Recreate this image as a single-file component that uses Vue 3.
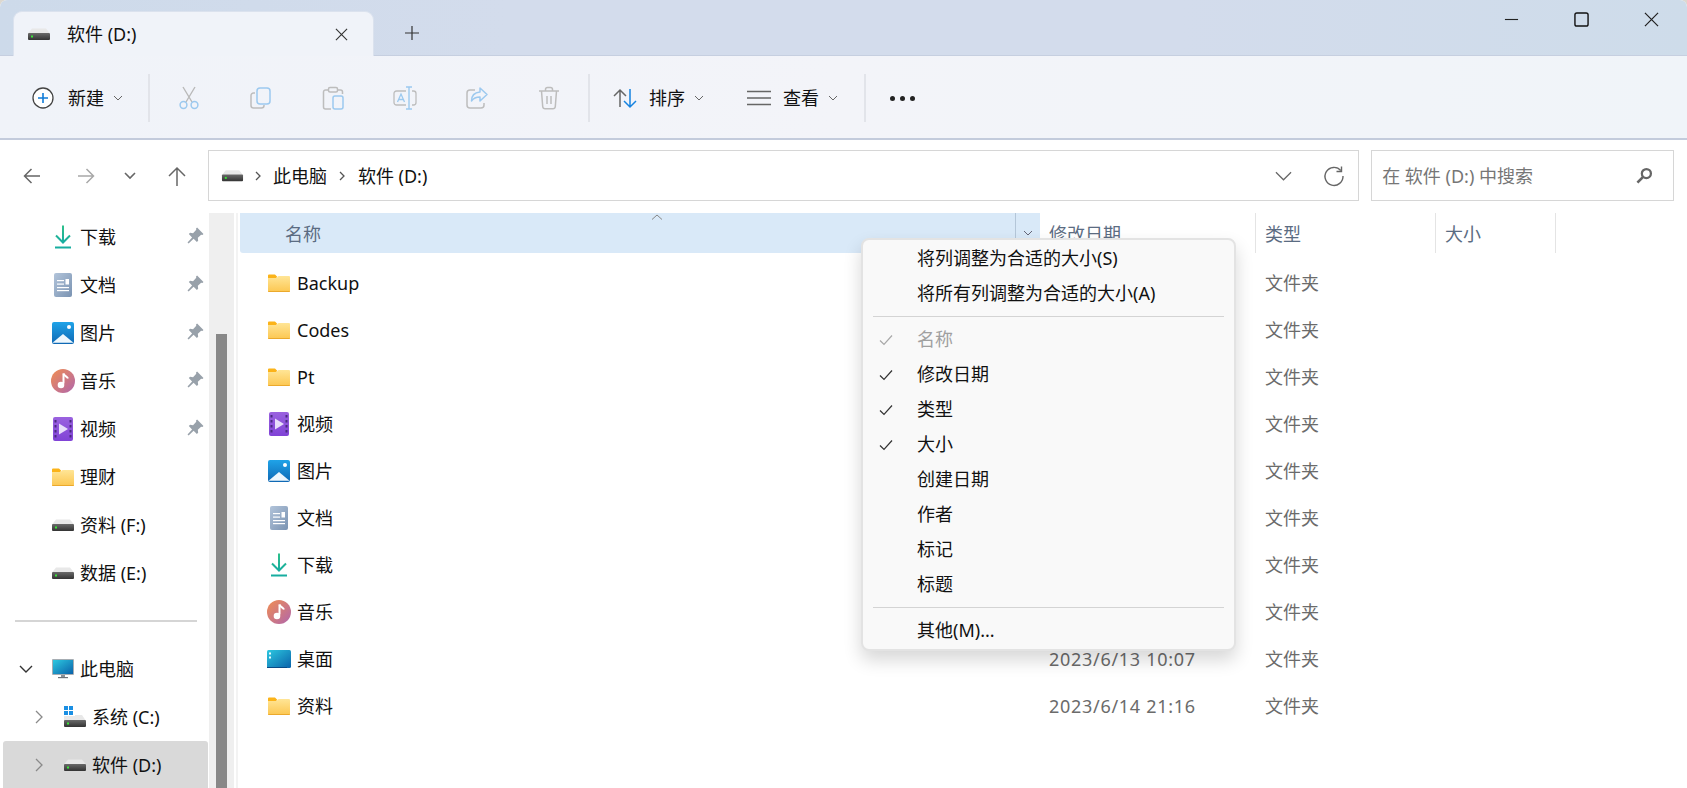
<script setup>
const quick = [
  { icon: 'i-download', label: '下载', pin: true },
  { icon: 'i-doc', label: '文档', pin: true },
  { icon: 'i-pic', label: '图片', pin: true },
  { icon: 'i-music', label: '音乐', pin: true },
  { icon: 'i-video', label: '视频', pin: true },
  { icon: 'i-folder', label: '理财' },
  { icon: 'i-drive', label: '资料 (F:)' },
  { icon: 'i-drive', label: '数据 (E:)' }
]
const files = [
  { icon: 'i-folder', name: 'Backup' },
  { icon: 'i-folder', name: 'Codes' },
  { icon: 'i-folder', name: 'Pt' },
  { icon: 'i-video', name: '视频' },
  { icon: 'i-pic', name: '图片' },
  { icon: 'i-doc', name: '文档' },
  { icon: 'i-download', name: '下载' },
  { icon: 'i-music', name: '音乐' },
  { icon: 'i-desktop', name: '桌面', date: '2023/6/13 10:07' },
  { icon: 'i-folder', name: '资料', date: '2023/6/14 21:16' }
]
const tools = ['t-cut', 't-copy', 't-paste', 't-rename', 't-share', 't-trash']
const menuTop = [{ label: '将列调整为合适的大小(S)' }, { label: '将所有列调整为合适的大小(A)' }]
const menuCols = [
  { label: '名称', check: true, off: true },
  { label: '修改日期', check: true },
  { label: '类型', check: true },
  { label: '大小', check: true },
  { label: '创建日期' },
  { label: '作者' },
  { label: '标记' },
  { label: '标题' }
]
</script>

<template>
  <div class="win">
    <svg class="defs" width="0" height="0" aria-hidden="true">
      <defs>
        <linearGradient id="g-folder" x1="0" y1="0" x2="0" y2="1"><stop offset="0" stop-color="#ffe596" /><stop offset="1" stop-color="#fcc751" /></linearGradient>
        <linearGradient id="g-pic" x1="0" y1="0" x2="0" y2="1"><stop offset="0" stop-color="#1fa3e8" /><stop offset="1" stop-color="#0f68b4" /></linearGradient>
        <linearGradient id="g-doc" x1="0" y1="0" x2="1" y2="1"><stop offset="0" stop-color="#b2c4da" /><stop offset="1" stop-color="#7a93b2" /></linearGradient>
        <linearGradient id="g-music" x1="0" y1="0" x2="1" y2="1"><stop offset="0" stop-color="#f18e52" /><stop offset="1" stop-color="#b066ac" /></linearGradient>
        <linearGradient id="g-video" x1="0" y1="0" x2="0" y2="1"><stop offset="0" stop-color="#9a62df" /><stop offset="1" stop-color="#8043d6" /></linearGradient>
        <linearGradient id="g-desk" x1="0" y1="0" x2="1" y2="1"><stop offset="0" stop-color="#2cc8e0" /><stop offset="1" stop-color="#0a62aa" /></linearGradient>
        <linearGradient id="g-green" x1="0" y1="0" x2="0" y2="1"><stop offset="0" stop-color="#2ec08a" /><stop offset="1" stop-color="#17ada0" /></linearGradient>
        <linearGradient id="g-drive" x1="0" y1="0" x2="0" y2="1"><stop offset="0" stop-color="#6a6a6a" /><stop offset="1" stop-color="#333" /></linearGradient>
        <symbol id="i-folder" viewBox="0 0 24 24">
          <path d="M1 4.5A1 1 0 0 1 2 3.500h6l2.500 2.500L8 7.500H1z" fill="#fbb319" />
          <path d="M1 7h8.500l2-2H22a1 1 0 0 1 1 1v14a1 1 0 0 1-1 1H2a1 1 0 0 1-1-1z" fill="url(#g-folder)" />
          <path d="M1 20h22a1 1 0 0 1-1 1H2a1 1 0 0 1-1-1z" fill="#eba92c" />
        </symbol>
        <symbol id="i-video" viewBox="0 0 24 24">
          <rect x="2" y="0" width="20" height="24" rx="2" fill="url(#g-video)" />
          <g fill="#4a2a80"><rect x="3.500" y="3" width="2" height="2.500" /><rect x="3.500" y="8" width="2" height="2.500" /><rect x="3.500" y="13" width="2" height="2.500" /><rect x="3.500" y="18" width="2" height="2.500" /><rect x="18.500" y="3" width="2" height="2.500" /><rect x="18.500" y="8" width="2" height="2.500" /><rect x="18.500" y="13" width="2" height="2.500" /><rect x="18.500" y="18" width="2" height="2.500" /></g>
          <path d="M8 6.500 17 12l-9 5.500z" fill="#e8defa" />
        </symbol>
        <symbol id="i-pic" viewBox="0 0 24 24">
          <rect x="1" y="1" width="22" height="22" rx="2" fill="url(#g-pic)" />
          <path d="M1.500 21.800 12 13 22.500 21.800z" fill="#eef7fd" />
          <circle cx="18" cy="6" r="2" fill="#fff" />
        </symbol>
        <symbol id="i-doc" viewBox="0 0 24 24">
          <rect x="3" y="0" width="18" height="24" rx="2" fill="url(#g-doc)" />
          <g fill="#fff"><rect x="6" y="7" width="7" height="1.200" /><rect x="6" y="10.500" width="7" height="1.200" /><rect x="6" y="14" width="12" height="1.200" /><rect x="6" y="17" width="12" height="1.200" /><rect x="14.500" y="6" width="3.500" height="5.500" /></g>
        </symbol>
        <symbol id="i-download" viewBox="0 0 24 24">
          <path d="M12 .5V17M5 10.500l7 7 7-7" fill="none" stroke="url(#g-green)" stroke-width="2" />
          <rect x="4" y="21.500" width="16" height="2" fill="#17ada0" />
        </symbol>
        <symbol id="i-music" viewBox="0 0 24 24">
          <circle cx="12" cy="12" r="12" fill="url(#g-music)" />
          <path d="M12.500 4.500v10" stroke="#fff" stroke-width="2" fill="none" />
          <path d="M12.500 4.500c.5 2.500 3.500 2.500 4.500 5" stroke="#fff" stroke-width="2" fill="none" />
          <circle cx="10" cy="16" r="3.300" fill="#fff" />
        </symbol>
        <symbol id="i-desktop" viewBox="0 0 24 24">
          <rect x="0" y="3" width="24" height="18" rx="1.500" fill="url(#g-desk)" />
          <rect x="2" y="5.500" width="2" height="2" fill="#e8fbff" /><rect x="2" y="9.500" width="2" height="2" fill="#e8fbff" />
          <rect x="0" y="20" width="20" height="1" fill="#084a86" />
        </symbol>
        <symbol id="i-monitor" viewBox="0 0 24 24">
          <rect x="1" y="2" width="22" height="16" rx="1" fill="#a6adb3" />
          <rect x="2" y="3" width="20" height="14" fill="url(#g-desk)" />
          <rect x="10" y="18" width="4" height="2.500" fill="#8a9096" />
          <rect x="7" y="20" width="10" height="1.200" fill="#6d7379" />
        </symbol>
        <symbol id="i-drive" viewBox="0 0 24 24">
          <path d="M5 6.500h14l4 5H1z" fill="#e8e8e8" />
          <rect x="1" y="11" width="22" height="7" rx="1" fill="url(#g-drive)" />
          <rect x="4" y="13.500" width="2" height="2" fill="#39e639" />
        </symbol>
        <symbol id="i-sysdrive" viewBox="0 0 24 24">
          <g fill="#1a8fe3"><rect x="1" y="1" width="4" height="4" /><rect x="6" y="1" width="4" height="4" /><rect x="1" y="6" width="4" height="4" /><rect x="6" y="6" width="4" height="4" /></g>
          <path d="M1 11h11v-1h7l4 6H1z" fill="#e8e8e8" />
          <rect x="1" y="15" width="22" height="7" rx="1" fill="url(#g-drive)" />
          <rect x="4" y="17.500" width="2" height="2" fill="#39e639" />
        </symbol>
        <symbol id="i-pin" viewBox="0 0 16 16">
          <path d="M9.500 .5 15.500 6.500l-1 1-1.200-.3L10.200 10.200l.3 2.800-1.200 1.200-3.100-3.100L1.500 15.500l-1-1 4.300-4.700-3.100-3.100 1.200-1.200 2.800.3L8.700 2.700l-.2-1.200z" fill="#98a1aa" />
        </symbol>
        <symbol id="t-cut" viewBox="0 0 24 24">
          <path d="M6 1l9 15M18 1L9 16" stroke="#b9b9b9" stroke-width="1.400" fill="none" />
          <circle cx="6.500" cy="19" r="3.400" fill="none" stroke="#9cc9ef" stroke-width="1.500" />
          <circle cx="17.500" cy="19" r="3.400" fill="none" stroke="#9cc9ef" stroke-width="1.500" />
        </symbol>
        <symbol id="t-copy" viewBox="0 0 24 24">
          <path d="M6 7H4.500A2.500 2.500 0 0 0 2 9.500v10A2.500 2.500 0 0 0 4.500 22h8a2.500 2.500 0 0 0 2.500-2.500V19" fill="none" stroke="#bdbdbd" stroke-width="1.500" />
          <rect x="8" y="2" width="13" height="16" rx="3" fill="none" stroke="#9cc9ef" stroke-width="1.500" />
        </symbol>
        <symbol id="t-paste" viewBox="0 0 24 24">
          <path d="M7 4H4.500A2 2 0 0 0 2.500 6v15a2 2 0 0 0 2 2H10M17 4h2.500a2 2 0 0 1 2 2v2" fill="none" stroke="#bdbdbd" stroke-width="1.500" />
          <rect x="7.500" y="1.500" width="9" height="4.500" rx="1.500" fill="none" stroke="#bdbdbd" stroke-width="1.500" />
          <rect x="12" y="10" width="10" height="13" rx="2" fill="none" stroke="#9cc9ef" stroke-width="1.500" />
        </symbol>
        <symbol id="t-rename" viewBox="0 0 24 24">
          <path d="M13 5H3.500A2.500 2.500 0 0 0 1 7.500v9A2.500 2.500 0 0 0 3.500 19H13M19 5h1.500A2.500 2.500 0 0 1 23 7.500v9a2.500 2.500 0 0 1-2.500 2.500H19" fill="none" stroke="#bdbdbd" stroke-width="1.300" />
          <path d="M4.500 16 8 8l3.500 8M5.700 13.500h4.600" fill="none" stroke="#9cc9ef" stroke-width="1.300" />
          <path d="M16 1v22M13 1h6M13 23h6" fill="none" stroke="#9cc9ef" stroke-width="1.400" />
        </symbol>
        <symbol id="t-share" viewBox="0 0 24 24">
          <path d="M10 4H5a3 3 0 0 0-3 3v12a3 3 0 0 0 3 3h11a3 3 0 0 0 3-3v-2" fill="none" stroke="#bdbdbd" stroke-width="1.500" />
          <path d="M15 2l7 6.500-7 6.500v-4c-4 0-6.500 1-8.500 4 0-5 3-8.500 8.500-9z" fill="none" stroke="#9cc9ef" stroke-width="1.500" stroke-linejoin="round" />
        </symbol>
        <symbol id="t-trash" viewBox="0 0 24 24">
          <path d="M2 5h20M8.500 5V3.500a2 2 0 0 1 2-2h3a2 2 0 0 1 2 2V5M4.500 5l1.200 15.500a2.500 2.500 0 0 0 2.500 2.300h7.600a2.500 2.500 0 0 0 2.500-2.300L19.500 5M10 10v8M14 10v8" fill="none" stroke="#bdbdbd" stroke-width="1.500" />
        </symbol>
      </defs>
    </svg>

    <header class="titlebar">
      <div class="tab">
        <svg class="tab-drive"><use href="#i-drive" /></svg>
        <span class="tab-label">软件 (D:)</span>
        <svg class="tab-x" viewBox="0 0 14 14"><path d="M1 1l12 12M13 1L1 13" stroke="#333" stroke-width="1.200" /></svg>
      </div>
      <svg class="tab-plus" viewBox="0 0 14 14"><path d="M7 0v14M0 7h14" stroke="#333" stroke-width="1.200" /></svg>
      <div class="win-ctl">
        <span class="ctl"><svg viewBox="0 0 16 16"><path d="M1 8h14" stroke="#222" stroke-width="1.200" /></svg></span>
        <span class="ctl"><svg viewBox="0 0 16 16"><rect x="1" y="1" width="14" height="14" rx="2" fill="none" stroke="#111" stroke-width="1.500" /></svg></span>
        <span class="ctl"><svg viewBox="0 0 16 16"><path d="M1 1l14 14M15 1L1 15" stroke="#222" stroke-width="1.300" /></svg></span>
      </div>
    </header>

    <section class="toolbar">
      <div class="tb-new">
        <svg class="ic-22" viewBox="0 0 22 22"><circle cx="11" cy="11" r="10" fill="#fff" stroke="#444" stroke-width="1.300" /><path d="M11 6v10M6 11h10" stroke="#0f7bd8" stroke-width="1.600" /></svg>
        <span class="tb-text">新建</span>
        <svg class="chev"><path d="M1 1l4 4 4-4" fill="none" stroke="#666" stroke-width="1" /></svg>
      </div>
      <i class="tb-sep"></i>
      <div class="tb-tools">
        <span v-for="t in tools" :key="t" class="tool"><svg class="ic-24"><use :href="'#' + t" /></svg></span>
      </div>
      <i class="tb-sep"></i>
      <div class="tb-sort">
        <svg class="ic-24" viewBox="0 0 24 24"><path d="M7 21V4M1 10l6-6 6 6" fill="none" stroke="#666" stroke-width="1.500" /><path d="M17 3v18M11 15l6 6 6-6" fill="none" stroke="#1683e0" stroke-width="1.500" /></svg>
        <span class="tb-text">排序</span>
        <svg class="chev"><path d="M1 1l4 4 4-4" fill="none" stroke="#666" stroke-width="1" /></svg>
      </div>
      <div class="tb-view">
        <svg class="ic-24" viewBox="0 0 24 24"><path d="M0 5.500h24M0 12h24M0 18.500h24" stroke="#666" stroke-width="1.500" /></svg>
        <span class="tb-text">查看</span>
        <svg class="chev"><path d="M1 1l4 4 4-4" fill="none" stroke="#666" stroke-width="1" /></svg>
      </div>
      <i class="tb-sep"></i>
      <div class="tb-more"><i></i><i></i><i></i></div>
    </section>

    <nav class="navbar">
      <span class="nav-btn w54"><svg class="ic-18" viewBox="0 0 18 18"><path d="M17 9H1.500M8.500 2l-7 7 7 7" fill="none" stroke="#666" stroke-width="1.500" /></svg></span>
      <span class="nav-btn w54"><svg class="ic-18" viewBox="0 0 18 18"><path d="M1 9h15.500M9.500 2l7 7-7 7" fill="none" stroke="#a8a8a8" stroke-width="1.500" /></svg></span>
      <span class="nav-btn w34"><svg class="ic-12" viewBox="0 0 12 8"><path d="M1 1l5 5 5-5" fill="none" stroke="#666" stroke-width="1.600" /></svg></span>
      <span class="nav-btn w61"><svg class="ic-20" viewBox="0 0 20 20"><path d="M10 20V2M2 10l8-8 8 8" fill="none" stroke="#666" stroke-width="1.500" /></svg></span>
      <div class="address">
        <svg class="addr-drive"><use href="#i-drive" /></svg>
        <svg class="crumb-arrow" viewBox="0 0 6 10"><path d="M1 1l4 4-4 4" fill="none" stroke="#555" stroke-width="1.300" /></svg>
        <span class="crumb">此电脑</span>
        <svg class="crumb-arrow" viewBox="0 0 6 10"><path d="M1 1l4 4-4 4" fill="none" stroke="#555" stroke-width="1.300" /></svg>
        <span class="crumb">软件 (D:)</span>
        <svg class="addr-down" viewBox="0 0 18 10"><path d="M1 1l8 8 8-8" fill="none" stroke="#666" stroke-width="1.300" /></svg>
        <svg class="addr-refresh" viewBox="0 0 20 20"><path d="M16.800 4.500A9 9 0 1 0 19 10" fill="none" stroke="#666" stroke-width="1.400" /><path d="M17.500 .5v5h-5" fill="none" stroke="#666" stroke-width="1.400" /></svg>
      </div>
      <div class="search">
        <span class="search-ph">在 软件 (D:) 中搜索</span>
        <svg class="search-ic" viewBox="0 0 18 18"><circle cx="11" cy="7" r="4.800" fill="none" stroke="#666" stroke-width="2.400" /><path d="M7.500 10.500 1.500 16.500" stroke="#666" stroke-width="2.800" /></svg>
      </div>
    </nav>

    <div class="body">
      <aside class="side">
        <div v-for="q in quick" :key="q.label" class="side-row">
          <span class="side-ic"><svg class="ic-24"><use :href="'#' + q.icon" /></svg></span>
          <span class="side-label">{{ q.label }}</span>
          <svg v-if="q.pin" class="pin"><use href="#i-pin" /></svg>
        </div>
        <div class="side-div"><i></i></div>
        <div class="side-row tree">
          <svg class="tree-chev open" viewBox="0 0 14 8"><path d="M1 1l6 6 6-6" fill="none" stroke="#333" stroke-width="1.400" /></svg>
          <span class="side-ic inner"><svg class="ic-24"><use href="#i-monitor" /></svg></span>
          <span class="side-label">此电脑</span>
        </div>
        <div class="side-row child">
          <svg class="tree-chev" viewBox="0 0 8 14"><path d="M1 1l6 6-6 6" fill="none" stroke="#8a8a8a" stroke-width="1.300" /></svg>
          <span class="side-ic inner"><svg class="ic-24"><use href="#i-sysdrive" /></svg></span>
          <span class="side-label">系统 (C:)</span>
        </div>
        <div class="side-row child selected">
          <svg class="tree-chev" viewBox="0 0 8 14"><path d="M1 1l6 6-6 6" fill="none" stroke="#8a8a8a" stroke-width="1.300" /></svg>
          <span class="side-ic inner"><svg class="ic-24"><use href="#i-drive" /></svg></span>
          <span class="side-label">软件 (D:)</span>
        </div>
      </aside>

      <div class="scroll"><div class="thumb"></div></div>
      <div class="scroll-edge"></div>

      <main class="list">
        <div class="head">
          <div class="h-name">
            <svg class="caret" viewBox="0 0 12 6"><path d="M1 5.500 6 1l5 4.500" fill="none" stroke="#888" stroke-width="1" /></svg>
            <span class="h-label">名称</span>
            <span class="h-split"><svg class="h-chev" viewBox="0 0 10 6"><path d="M1 1l4 4 4-4" fill="none" stroke="#667" stroke-width="1" /></svg></span>
          </div>
          <div class="h-date">修改日期</div>
          <div class="h-type">类型</div>
          <div class="h-size">大小</div>
        </div>
        <div v-for="f in files" :key="f.name" class="row">
          <div class="r-name">
            <span class="r-ic"><svg class="ic-24"><use :href="'#' + f.icon" /></svg></span>
            <span class="r-label">{{ f.name }}</span>
          </div>
          <div class="r-date">{{ f.date }}</div>
          <div class="r-type">文件夹</div>
        </div>
      </main>
    </div>

    <div class="menu">
      <div v-for="m in menuTop" :key="m.label" class="m-item"><span class="m-check"></span>{{ m.label }}</div>
      <div class="m-sep first"></div>
      <div v-for="m in menuCols" :key="m.label" class="m-item" :class="{ off: m.off }">
        <span class="m-check">
          <svg v-if="m.check" viewBox="0 0 14 12"><path d="M1 6.500 5 10.500 13 1.500" fill="none" stroke="currentColor" stroke-width="1.200" /></svg>
        </span><span class="m-text">{{ m.label }}</span>
      </div>
      <div class="m-sep"></div>
      <div class="m-item last"><span class="m-check"></span>其他(M)...</div>
    </div>
  </div>
</template>

<style scoped>
.win {
  position: relative;
  width: 1687px;
  height: 788px;
  overflow: hidden;
  display: flex;
  flex-direction: column;
  background: #fff;
  border-radius: 7px 7px 0 0;
  font-family: "Noto Sans", "Noto Sans CJK SC", sans-serif;
  font-size: 18px;
  line-height: 24px;
  color: #111;
}
.defs { position: absolute; }
svg { display: block; flex: none; overflow: visible; }
.ic-24 { width: 24px; height: 24px; }
.ic-22 { width: 22px; height: 22px; }
.ic-20 { width: 20px; height: 20px; }
.ic-18 { width: 18px; height: 18px; }
.ic-12 { width: 12px; height: 8px; }

.titlebar {
  height: 56px;
  flex: none;
  display: flex;
  align-items: flex-end;
  box-sizing: border-box;
  border-bottom: 1px solid #c6cfe0;
  background: linear-gradient(90deg, #cddaea 0%, #d3dcec 30%, #d3dcec 70%, #cedcea 100%);
}
.tab {
  position: relative;
  width: 361px;
  height: 45px;
  margin-left: 13px;
  margin-bottom: -1px;
  box-sizing: border-box;
  display: flex;
  align-items: center;
  padding: 0 25px 0 13px;
  background: #f0f3f9;
  border: 1px solid #dbe2ee;
  border-bottom: 0;
  border-radius: 9px 9px 0 0;
}
.tab-drive { width: 24px; height: 24px; }
.tab-label { margin-left: 16px; flex: 1; }
.tab-x { width: 13px; height: 13px; }
.tab-plus { width: 14px; height: 14px; margin: 0 0 15px 31px; }
.win-ctl { margin-left: auto; display: flex; align-self: flex-start; margin-top: 12px; margin-right: 28px; gap: 55px; }
.ctl svg { width: 15px; height: 15px; }

.toolbar {
  height: 84px;
  flex: none;
  box-sizing: border-box;
  border-bottom: 2px solid #c3cbdc;
  padding-top: 2px;
  display: flex;
  align-items: center;
  background: linear-gradient(90deg, #f0f3f9, #f3f4f9 50%, #f0f4f9);
}
.tb-new { display: flex; align-items: center; margin-left: 32px; width: 116px; }
.tb-text { margin-left: 14px; width: 36px; white-space: nowrap; }
.chev { width: 10px; height: 6px; margin-left: 9px; }
.tb-sep { width: 2px; height: 48px; background: #e2e4ea; flex: none; }
.tb-tools { display: flex; margin-left: 3px; }
.tool { width: 72px; display: flex; justify-content: center; }
.tb-tools + .tb-sep { margin-left: 3px; }
.tb-sort { display: flex; align-items: center; margin-left: 23px; }
.tb-sort .tb-text { margin-left: 12px; }
.tb-view { display: flex; align-items: center; margin-left: 43px; }
.tb-view .tb-text { margin-left: 12px; }
.tb-view + .tb-sep { margin-left: 26px; }
.tb-more { display: flex; gap: 5px; margin-left: 24px; }
.tb-more i { width: 5px; height: 5px; border-radius: 50%; background: #222; }

.navbar {
  height: 73px;
  flex: none;
  box-sizing: border-box;
  padding: 10px 13px 12px 5px;
  display: flex;
  align-items: stretch;
}
.nav-btn { display: flex; align-items: center; justify-content: center; }
.w54 { width: 54px; }
.w34 { width: 34px; }
.w61 { width: 61px; }
.address, .search {
  display: flex;
  align-items: center;
  box-sizing: border-box;
  border: 1px solid #d6d6d6;
}
.address { width: 1152px; padding: 0 14px 0 12px; }
.addr-drive { width: 23px; height: 23px; }
.crumb-arrow { width: 6px; height: 10px; margin: 0 13px 0 12px; }
.addr-drive + .crumb-arrow { margin: 0 12px 0 11px; }
.crumb { white-space: nowrap; }
.addr-down { width: 17px; height: 10px; margin-left: auto; }
.addr-refresh { width: 20px; height: 20px; margin-left: 32px; }
.search { width: 303px; margin-left: 12px; padding: 0 20px 0 10px; color: #767676; }
.search-ic { width: 17px; height: 17px; margin-left: auto; }

.body { flex: 1; display: flex; min-height: 0; }
.side { width: 209px; flex: none; position: relative; z-index: 0; }
.side-row { position: relative; height: 48px; display: flex; align-items: center; }
.side-ic { width: 24px; margin-left: 51px; margin-right: 5px; }
.side-label { white-space: nowrap; }
.pin { position: absolute; left: 187px; top: 14px; width: 17px; height: 17px; }
.side-div { height: 48px; display: flex; align-items: center; padding: 0 12px 0 15px; }
.side-div i { flex: 1; height: 2px; background: #d5d5d5; }
.tree-chev { width: 14px; height: 8px; margin-left: 19px; }
.tree-chev + .side-ic.inner { margin-left: 18px; }
.child .tree-chev { width: 8px; height: 14px; margin-left: 35px; }
.child .tree-chev + .side-ic.inner { margin-left: 20px; margin-right: 5px; }
.selected::before {
  content: "";
  position: absolute;
  inset: 0 1px 0 3px;
  background: #d9d9d9;
  border-radius: 3px 3px 0 0;
  z-index: -1;
}

.scroll { width: 25px; flex: none; padding-left: 7px; box-sizing: border-box; background: #efefef; }
.thumb { width: 11px; margin-top: 121px; height: 100%; background: #888; }
.scroll-edge { width: 2px; margin-left: 2px; flex: none; background: #f3f3f3; }

.list { flex: 1; margin-left: 2px; min-width: 0; }
.head { height: 40px; display: flex; margin-bottom: 6px; color: #5b6c82; }
.h-name {
  position: relative;
  width: 800px;
  display: flex;
  align-items: center;
  padding-left: 45px;
  box-sizing: border-box;
  background: #d9e9f8;
  border-radius: 0 0 3px 3px;
}
.h-label { flex: 1; position: relative; top: 1px; }
.caret { position: absolute; left: 411px; top: 1px; width: 12px; height: 6px; }
.h-split {
  width: 24px;
  align-self: stretch;
  border-left: 1px solid #b4c6d8;
  display: flex;
  align-items: center;
  justify-content: center;
}
.h-chev { width: 10px; height: 6px; }
.h-date, .h-type, .h-size { display: flex; align-items: center; box-sizing: border-box; padding: 2px 0 0 9px; border-right: 1px solid #e4e4e4; }
.h-date { width: 216px; }
.h-type { width: 180px; }
.h-size { width: 120px; }
.row { height: 47px; display: flex; align-items: center; }
.r-name { width: 809px; display: flex; align-items: center; padding-left: 27px; box-sizing: border-box; }
.r-ic { width: 24px; margin-right: 6px; }
.r-date { width: 216px; color: #6b6b6b; letter-spacing: .7px; }
.r-type { color: #6b6b6b; }

.menu {
  position: absolute;
  left: 861px;
  top: 238px;
  width: 375px;
  box-sizing: border-box;
  padding-top: 2px;
  background: #f9f9f9;
  border: 2px solid #e3e3e3;
  border-radius: 8px;
  box-shadow: 0 9px 18px rgba(0, 0, 0, .16);
}
.m-item { height: 35px; box-sizing: border-box; padding-bottom: 3px; display: flex; align-items: center; white-space: nowrap; }
.m-item.off { color: #a0a0a0; }
.m-check { width: 54px; flex: none; padding-left: 16px; box-sizing: border-box; color: #333; }
.off .m-check { color: #a8a8a8; }
.m-check svg { width: 14px; height: 12px; position: relative; top: 1px; }
.m-sep { height: 1px; margin: 4px 10px 6px; background: #d4d4d4; }
</style>

<style>
html, body { background: #dcd8d0; }
</style>
